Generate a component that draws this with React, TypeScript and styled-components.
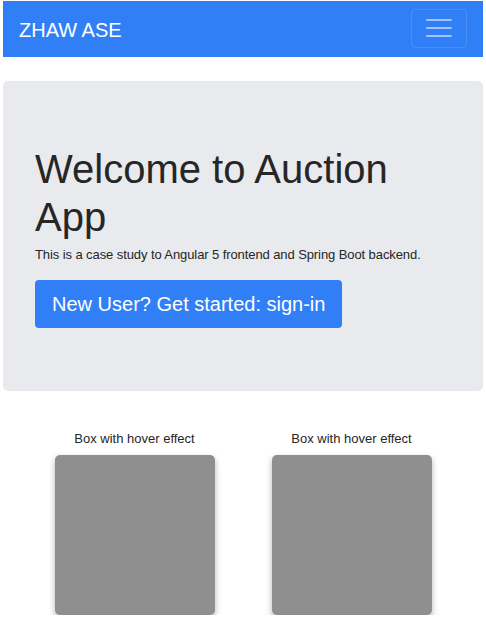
import React from "react";
import styled, { createGlobalStyle } from "styled-components";

const Global = createGlobalStyle`
  html, body { margin: 0; padding: 0; background: #fff; }
  body {
    font-family: "Liberation Sans", Arial, Helvetica, sans-serif;
    color: #2b2b2b;
  }
  * { box-sizing: border-box; }
`;

const Page = styled.div`
  padding: 1px 3px 0 3px;
`;

const Navbar = styled.nav`
  height: 56px;
  background: #307ff7;
  display: flex;
  align-items: center;
  justify-content: space-between;
  padding: 0 16px 0 16px;
`;

const Brand = styled.a`
  color: #fff;
  font-size: 20px;
  line-height: 1;
  text-decoration: none;
  padding-top: 1px;
`;

const Toggler = styled.button`
  width: 56px;
  height: 39px;
  margin-top: -2px;
  background: transparent;
  border: 1px solid rgba(255, 255, 255, 0.12);
  border-radius: 4px;
  display: flex;
  align-items: center;
  justify-content: center;
  padding: 0;
  cursor: pointer;
`;

const Jumbotron = styled.section`
  margin-top: 24px;
  background: #e9eaee;
  border-radius: 5px;
  padding: 64px 32px 64px 32px;
  height: 310px;
`;

const Heading = styled.h1`
  margin: 0 0 4px 0;
  font-size: 40px;
  font-weight: 400;
  line-height: 48px;
  color: #262626;
`;

const Lead = styled.p`
  margin: 0 0 15px 0;
  font-size: 13px;
  letter-spacing: -0.09px;
  line-height: 20px;
  white-space: nowrap;
  color: #262626;
`;

const BigButton = styled.button`
  font-family: inherit;
  background: #307ff7;
  color: #fff;
  border: none;
  border-radius: 4px;
  font-size: 20px;
  height: 48px;
  padding: 0 17px;
  cursor: pointer;
`;

const BoxRow = styled.div`
  display: grid;
  grid-template-columns: 217px 217px;
  justify-content: center;
  margin-top: 39px;
`;

const BoxCol = styled.div`
  display: flex;
  flex-direction: column;
  align-items: center;
`;

const BoxLabel = styled.div`
  font-size: 13px;
  line-height: 18px;
  color: #262626;
  margin-bottom: 7px;
`;

const HoverBox = styled.div`
  width: 160px;
  height: 160px;
  background: #8f8f8f;
  border-radius: 5px;
  box-shadow: 0 3px 6px rgba(0, 0, 0, 0.3);
  transition: transform 0.2s;
  &:hover { transform: scale(1.05); }
`;

export default function App() {
  return (
    <>
      <Global />
      <Page>
        <Navbar>
          <Brand href="#">ZHAW ASE</Brand>
          <Toggler aria-label="Toggle navigation">
            <svg width="26" height="20" viewBox="0 0 26 20">
              <g stroke="rgba(255,255,255,0.55)" strokeWidth="2" strokeLinecap="round">
                <line x1="1" y1="2" x2="25" y2="2" />
                <line x1="1" y1="10" x2="25" y2="10" />
                <line x1="1" y1="18" x2="25" y2="18" />
              </g>
            </svg>
          </Toggler>
        </Navbar>
        <Jumbotron>
          <Heading>Welcome to Auction App</Heading>
          <Lead>This is a case study to Angular 5 frontend and Spring Boot backend.</Lead>
          <BigButton>New User? Get started: sign-in</BigButton>
        </Jumbotron>
        <BoxRow>
          <BoxCol>
            <BoxLabel>Box with hover effect</BoxLabel>
            <HoverBox />
          </BoxCol>
          <BoxCol>
            <BoxLabel>Box with hover effect</BoxLabel>
            <HoverBox />
          </BoxCol>
        </BoxRow>
      </Page>
    </>
  );
}
